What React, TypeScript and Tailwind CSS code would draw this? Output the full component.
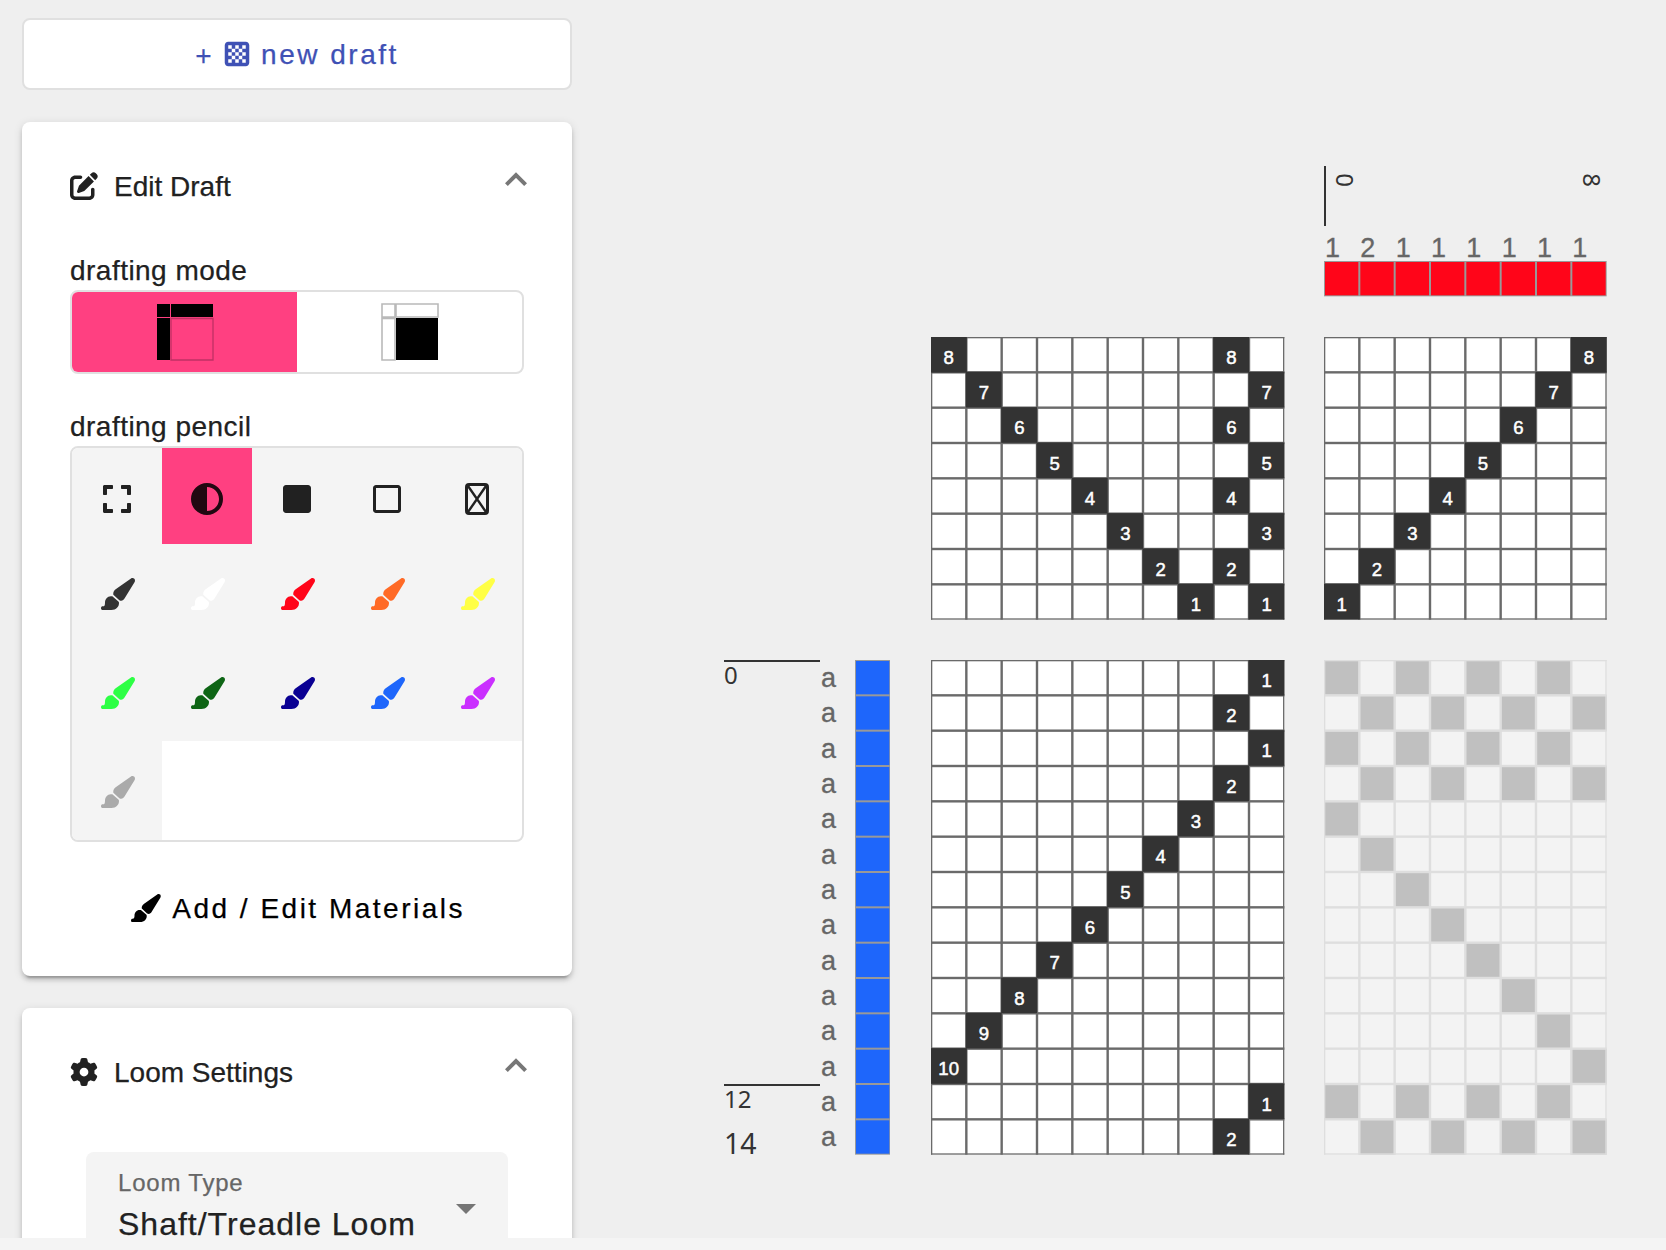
import React from "react";
import { FaSquare, FaRegSquare, FaExpand } from "react-icons/fa";
import { FaPenToSquare, FaGear, FaCircleHalfStroke, FaChessBoard } from "react-icons/fa6";

const P = 106 / 3;

type Filled = [number, number, string?];

function DraftGrid({ cols, rows, cells, faded = false }: { cols: number; rows: number; cells: Filled[]; faded?: boolean }) {
  const w = cols * P;
  const h = rows * P;
  const lines = faded ? "#dedede" : "#6a6a6a";
  return (
    <svg width={w} height={h} viewBox={`0 0 ${w} ${h}`} className="block overflow-visible">
      <rect width={w} height={h} fill={faded ? "#f3f3f3" : "#ffffff"} />
      {faded && cells.map(([c, r]) => <rect key={`${c}-${r}`} x={c * P} y={r * P} width={P} height={P} fill="#c0c0c0" />)}
      {Array.from({ length: cols + 1 }, (_, i) => (
        <rect key={`v${i}`} x={i === 0 ? 0 : i === cols ? w - 1.3 : i * P - 1.2} y={0} width={i === 0 || i === cols ? 1.3 : 2.4} height={h} fill={lines} />
      ))}
      {Array.from({ length: rows + 1 }, (_, i) => (
        <rect key={`h${i}`} y={i === 0 ? 0 : i === rows ? h - 1.3 : i * P - 1.2} x={0} height={i === 0 || i === rows ? 1.3 : 2.4} width={w} fill={lines} />
      ))}
      {!faded && cells.map(([c, r, t]) => (
        <g key={`${c}-${r}`}>
          <rect x={c * P - (c ? 0.5 : 0)} y={r * P - (r ? 0.5 : 0)} width={P + 0.5} height={P + 0.3} fill="#333333" />
          <text x={c * P + P / 2} y={r * P + 26.8} textAnchor="middle" fontSize={18.6} stroke="#fff" strokeWidth={0.5} fill="#ffffff">{t}</text>
        </g>
      ))}
    </svg>
  );
}

const tieup: Filled[] = [];
for (let i = 0; i < 8; i++) {
  tieup.push([i, i, String(8 - i)]);
  tieup.push([i % 2 ? 9 : 8, i, String(8 - i)]);
}
const threading: Filled[] = Array.from({ length: 8 }, (_, i) => [7 - i, i, String(8 - i)]);
const treadleOrder = [1, 2, 1, 2, 3, 4, 5, 6, 7, 8, 9, 10, 1, 2];
const treadling: Filled[] = treadleOrder.map((t, r) => [10 - t, r, String(t)]);
const drawdown: Filled[] = treadleOrder.flatMap((t, r): Filled[] =>
  t === 1 ? [[0, r], [2, r], [4, r], [6, r]] : t === 2 ? [[1, r], [3, r], [5, r], [7, r]] : [[t - 3, r]]
);

const pencils = ["#333333", "#ffffff", "#ff0519", "#ff6a26", "#ffff45", "#2dff45", "#0e6515", "#0a0093", "#1e66fb", "#ca2fff", "#aaaaaa"];

function Chevron() {
  return (
    <svg width="22" height="14" viewBox="0 0 22 14" className="block" fill="none" stroke="#777" strokeWidth="4">
      <path d="M1.4 12.6 11 3 20.6 12.6" />
    </svg>
  );
}

function Brush({ height, color, className }: { height: number; color: string; className?: string }) {
  return (
    <svg width={(height * 102) / 96} height={height} viewBox="0 0 102 96" fill={color} className={className}>
      <path d="M90 1.5 45 33C38 38 36 44 37 50L55 66.5C61 70 67 68 71 61L100.5 13C102.5 9 102.5 5 100 2 97-.5 93-.5 90 1.5Z" />
      <path d="M34 55C21 52 12 62 12 74 12 81 11 85 6 85 2 85 0 87 0 90.5 0 94 2 96 6 96H31C46 96 54 86 54 75 54 73 53.5 72 53 71Z" />
    </svg>
  );
}

export default function App() {
  return (
    <div className="h-[1250px] w-[1666px] overflow-hidden bg-[#f4f4f4] font-['Liberation_Sans',Arial,sans-serif] text-[#212121]">
      <div className="flex h-[1238px] overflow-hidden bg-[#efefef]">
        <aside className="ml-[22px] mt-[18px] w-[550px] shrink-0 [-webkit-text-stroke:0.25px]">
          <button className="flex h-[72px] w-full items-center justify-center rounded-[8px] border-2 border-[#e0e0e0] bg-white text-[28px] tracking-[2.5px] text-[#3f51b5]">
            <span className="mr-[9px] mt-[4px] text-[28px] leading-none">+</span>
            <FaChessBoard size={28} className="-mt-px mr-[10px]" />
            <span className="mt-[2px]">new draft</span>
          </button>

          <section className="mt-8 h-[854px] rounded-[8px] bg-white px-12 pt-[50px] shadow-[0_6px_2px_-4px_rgba(0,0,0,0.2),0_4px_4px_0_rgba(0,0,0,0.14),0_2px_10px_0_rgba(0,0,0,0.12)]">
            <header className="flex h-8 items-start">
              <FaPenToSquare className="size-7" />
              <h2 className="-mt-px ml-[16px] text-[28px] leading-[32px]">Edit Draft</h2>
              <div className="ml-auto mr-[-3px]"><Chevron /></div>
            </header>
            <h3 className="mt-[49px] text-[28px] leading-[36px] tracking-[0.47px]">drafting mode</h3>
            <div className="mt-px grid h-[84px] w-[454px] grid-cols-2 overflow-hidden rounded-[8px] border-2 border-[#e0e0e0]">
              <div className="flex items-center justify-center bg-[#ff4081]">
                <svg width="56" height="56" viewBox="0 0 56 56" className="ml-px overflow-visible">
                  <path d="M0 0h13v13H0zM14 0h42v13H14zM0 14h13v42H0z" fill="#000" />
                  <path d="M14 14.5h42V56H14z" fill="none" stroke="#c03064" strokeWidth="1.3" />
                </svg>
              </div>
              <div className="flex items-center justify-center">
                <svg width="56" height="56" viewBox="0 0 56 56" className="ml-px overflow-visible">
                  <path d="M0 0h13v13H0zM14 0h42v13H14zM0 14.5h13V56H0z" fill="none" stroke="#b9b9b9" strokeWidth="1.6" />
                  <path d="M14 14H56V56H14z" fill="#000" />
                </svg>
              </div>
            </div>
            <h3 className="mt-[35px] text-[28px] leading-[36px] tracking-[0.47px]">drafting pencil</h3>
            <div className="mt-px grid h-[396px] w-[454px] grid-cols-5 grid-rows-[96px_98px_99px_99px] overflow-hidden rounded-[8px] border-2 border-[#e0e0e0]">
              <div className="flex items-center justify-center bg-[#f4f4f4] pt-[6px]"><FaExpand size={32} /></div>
              <div className="flex items-center justify-center bg-[#ff4081] pt-[6px] text-[#210811]"><FaCircleHalfStroke size={32} /></div>
              <div className="flex items-center justify-center bg-[#f4f4f4] pt-[6px]"><FaSquare size={32} /></div>
              <div className="flex items-center justify-center bg-[#f4f4f4] pt-[6px]"><FaRegSquare size={32} /></div>
              <div className="flex items-center justify-center bg-[#f4f4f4] pt-[6px]">
                <svg width="24" height="32" viewBox="0 0 24 32" fill="none" stroke="#212121">
                  <rect x="1.5" y="1.5" width="21" height="29" rx="2.5" strokeWidth="3" />
                  <path d="M3 3 21 29M21 3 3 29" strokeWidth="2.4" />
                </svg>
              </div>
              {pencils.map((c) => (
                <div key={c} className="flex items-center justify-center bg-[#f4f4f4] pl-[2px] pt-[2px]">
                  <Brush height={32} color={c} />
                </div>
              ))}
            </div>
            <div className="mt-[49px] flex items-center justify-center text-[28px] leading-[36px] tracking-[2.5px] text-black">
              <Brush height={28} color="#000" className="-mt-[2px] ml-[2.5px] mr-[11px]" />
              <span>Add / Edit Materials</span>
            </div>
          </section>

          <section className="mt-8 h-[400px] rounded-[8px] bg-white px-12 pt-[50px] shadow-[0_6px_2px_-4px_rgba(0,0,0,0.2),0_4px_4px_0_rgba(0,0,0,0.14),0_2px_10px_0_rgba(0,0,0,0.12)]">
            <header className="flex h-8 items-start">
              <FaGear className="size-7" />
              <h2 className="-mt-px ml-[16px] text-[28px] leading-[32px]">Loom Settings</h2>
              <div className="ml-auto mr-[-3px]"><Chevron /></div>
            </header>
            <div className="ml-4 mt-[62px] flex h-[112px] w-[422px] justify-between rounded-t-[8px] bg-[#f4f4f4] pl-8 pr-8 pt-[16px]">
              <div>
                <div className="text-[24px] leading-[30px] tracking-[0.8px] text-[#666]">Loom Type</div>
                <div className="mt-[6px] whitespace-nowrap text-[32px] leading-[40px] tracking-[1px]">Shaft/Treadle Loom</div>
              </div>
              <svg width="20" height="10" viewBox="0 0 20 10" className="mt-[36px]"><path d="M0 0h20L10 10z" fill="#757575" /></svg>
            </div>
          </section>
        </aside>

        <main className="ml-[152px] mt-[166px] grid h-fit grid-cols-[96px_35px_75.5px_393.5px_283px] grid-rows-[60px_35.3px_75.7px_323px_495px] text-[#333]">
          <div className="col-start-5 flex justify-between border-l-2 border-[#333] pl-2 pr-[4px]">
            <span className="flex h-7 w-[22px] items-center justify-center font-['Noto_Sans'] text-[24px]"><span className="rotate-90">0</span></span>
            <span className="flex h-7 w-[22px] items-center justify-center font-['Noto_Sans'] text-[24px]"><span className="rotate-90">8</span></span>
          </div>
          <div className="col-start-5 row-start-2 flex pt-[6px] text-[27px] leading-[32px] text-[#666] [-webkit-text-stroke:0.3px]">
            {[1, 2, 1, 1, 1, 1, 1, 1].map((n, i) => <span key={i} className="w-[35.33px] shrink-0 pl-[1px]">{n}</span>)}
          </div>
          <svg width={8 * P} height={P} className="col-start-5 row-start-3 block">
            <rect width={8 * P} height={P} fill="#999" />
            {Array.from({ length: 8 }, (_, i) => <rect key={i} x={i * P + 1} y="1" width={P - 2} height={P - 2} fill="#ff0519" />)}
          </svg>
          <div className="col-start-4 row-start-4"><DraftGrid cols={10} rows={8} cells={tieup} /></div>
          <div className="col-start-5 row-start-4"><DraftGrid cols={8} rows={8} cells={threading} /></div>
          <div className="row-start-5 flex flex-col font-['Noto_Sans'] text-[24px] leading-[26px]">
            <div className="h-[424px] shrink-0 border-t-2 border-[#333]">0</div>
            <div className="h-[44px] shrink-0 border-t-2 border-[#333]">12</div>
            <div className="shrink-0 text-[28.5px] leading-[30px]">14</div>
          </div>
          <div className="col-start-2 row-start-5 flex flex-col pt-px text-[27px] leading-[35.33px] text-[#666] [-webkit-text-stroke:0.3px]">
            {treadleOrder.map((_, i) => <span key={i} className="h-[35.33px] shrink-0 pl-px">a</span>)}
          </div>
          <div className="col-start-3 row-start-5">
            <svg width={P} height={14 * P} className="block">
              <rect width={P} height={14 * P} fill="#999" />
              {treadleOrder.map((_, i) => <rect key={i} x="1" y={i * P + 1} width={P - 2} height={P - 2} fill="#1e66fb" />)}
            </svg>
          </div>
          <div className="col-start-4 row-start-5"><DraftGrid cols={10} rows={14} cells={treadling} /></div>
          <div className="col-start-5 row-start-5"><DraftGrid cols={8} rows={14} cells={drawdown} faded /></div>
        </main>
      </div>
    </div>
  );
}
